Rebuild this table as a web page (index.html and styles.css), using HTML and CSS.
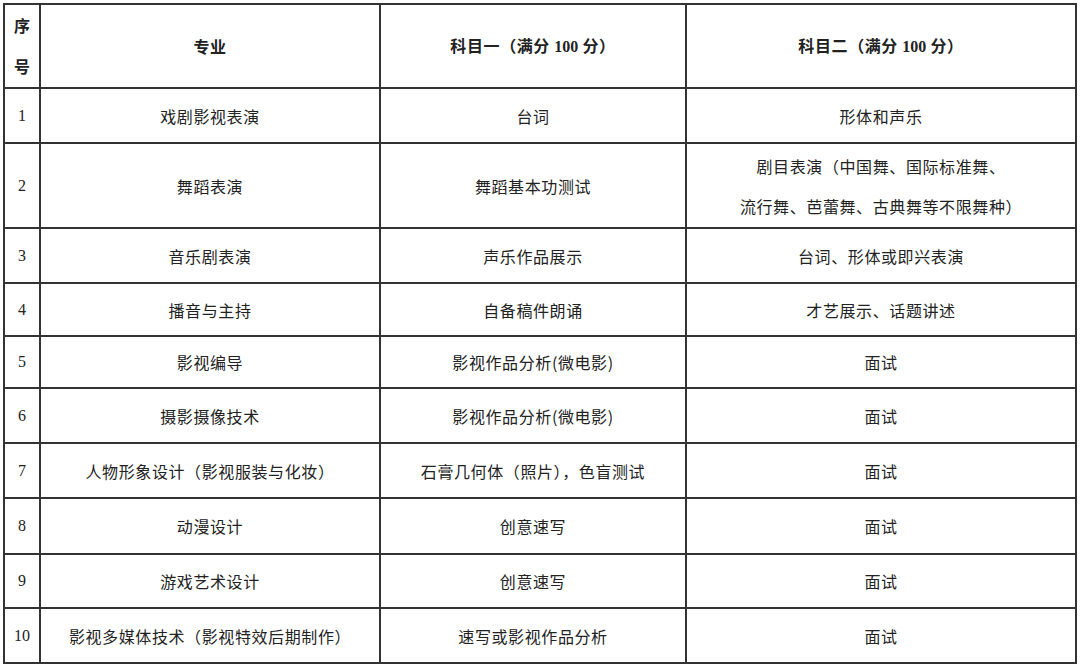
FILE: index.html
```html
<!DOCTYPE html>
<html lang="zh-CN">
<head>
<meta charset="utf-8">
<title>专业考试科目</title>
<link rel="stylesheet" href="styles.css">
</head>
<body>
<div class="page">
<table class="exam">
  <colgroup>
    <col class="c-no">
    <col class="c-major">
    <col class="c-sub1">
    <col class="c-sub2">
  </colgroup>
  <thead>
    <tr class="head">
      <th class="no">序号</th>
      <th>专业</th>
      <th>科目一（满分 <span class="num">100</span> 分）</th>
      <th>科目二（满分 <span class="num">100</span> 分）</th>
    </tr>
  </thead>
  <tbody>
    <tr class="r1"><td class="no">1</td><td>戏剧影视表演</td><td>台词</td><td>形体和声乐</td></tr>
    <tr class="r2"><td class="no">2</td><td>舞蹈表演</td><td>舞蹈基本功测试</td><td>剧目表演（中国舞、国际标准舞、<br>流行舞、芭蕾舞、古典舞等不限舞种）</td></tr>
    <tr class="r3"><td class="no">3</td><td>音乐剧表演</td><td>声乐作品展示</td><td>台词、形体或即兴表演</td></tr>
    <tr class="r4"><td class="no">4</td><td>播音与主持</td><td>自备稿件朗诵</td><td>才艺展示、话题讲述</td></tr>
    <tr class="r5"><td class="no">5</td><td>影视编导</td><td>影视作品分析(微电影)</td><td>面试</td></tr>
    <tr class="r6"><td class="no">6</td><td>摄影摄像技术</td><td>影视作品分析(微电影)</td><td>面试</td></tr>
    <tr class="r7"><td class="no">7</td><td>人物形象设计（影视服装与化妆）</td><td>石膏几何体（照片），色盲测试</td><td>面试</td></tr>
    <tr class="r8"><td class="no">8</td><td>动漫设计</td><td>创意速写</td><td>面试</td></tr>
    <tr class="r9"><td class="no">9</td><td>游戏艺术设计</td><td>创意速写</td><td>面试</td></tr>
    <tr class="r10"><td class="no">10</td><td>影视多媒体技术（影视特效后期制作）</td><td>速写或影视作品分析</td><td>面试</td></tr>
  </tbody>
</table>
</div>
</body>
</html>
```

FILE: styles.css
```css
html, body {
  margin: 0;
  padding: 0;
  background: #ffffff;
}

.page {
  padding: 3px 0 0 3px;
}

.exam {
  border-collapse: collapse;
  table-layout: fixed;
  width: 1072px;
  font-family: "Noto Sans CJK SC", "Liberation Serif", serif;
  font-size: 16px;
  letter-spacing: 0.6px;
  color: #222;
}

.c-no { width: 36px; }
.c-major { width: 340px; }
.c-sub1 { width: 306px; }
.c-sub2 { width: 390px; }

.exam th,
.exam td {
  border: 2px solid #333;
  text-align: center;
  vertical-align: middle;
  padding: 0 4px;
  line-height: 40px;
  font-weight: 400;
}

.exam th {
  font-weight: 700;
}

.exam th.no {
  padding: 0 6px;
  line-height: 41px;
  letter-spacing: 0;
}

.exam td.no {
  padding: 0 2px;
  font-family: "Liberation Serif", serif;
  font-size: 16px;
  letter-spacing: 0;
}

.num {
  font-family: "Liberation Serif", serif;
  letter-spacing: 0;
}

.head { height: 84px; }
.r1 { height: 55px; }
.r2 { height: 85px; }
.r3 { height: 55px; }
.r4 { height: 53px; }
.r5 { height: 52px; }
.r6 { height: 55px; }
.r7 { height: 55px; }
.r8 { height: 56px; }
.r9 { height: 54px; }
.r10 { height: 55px; }
```
